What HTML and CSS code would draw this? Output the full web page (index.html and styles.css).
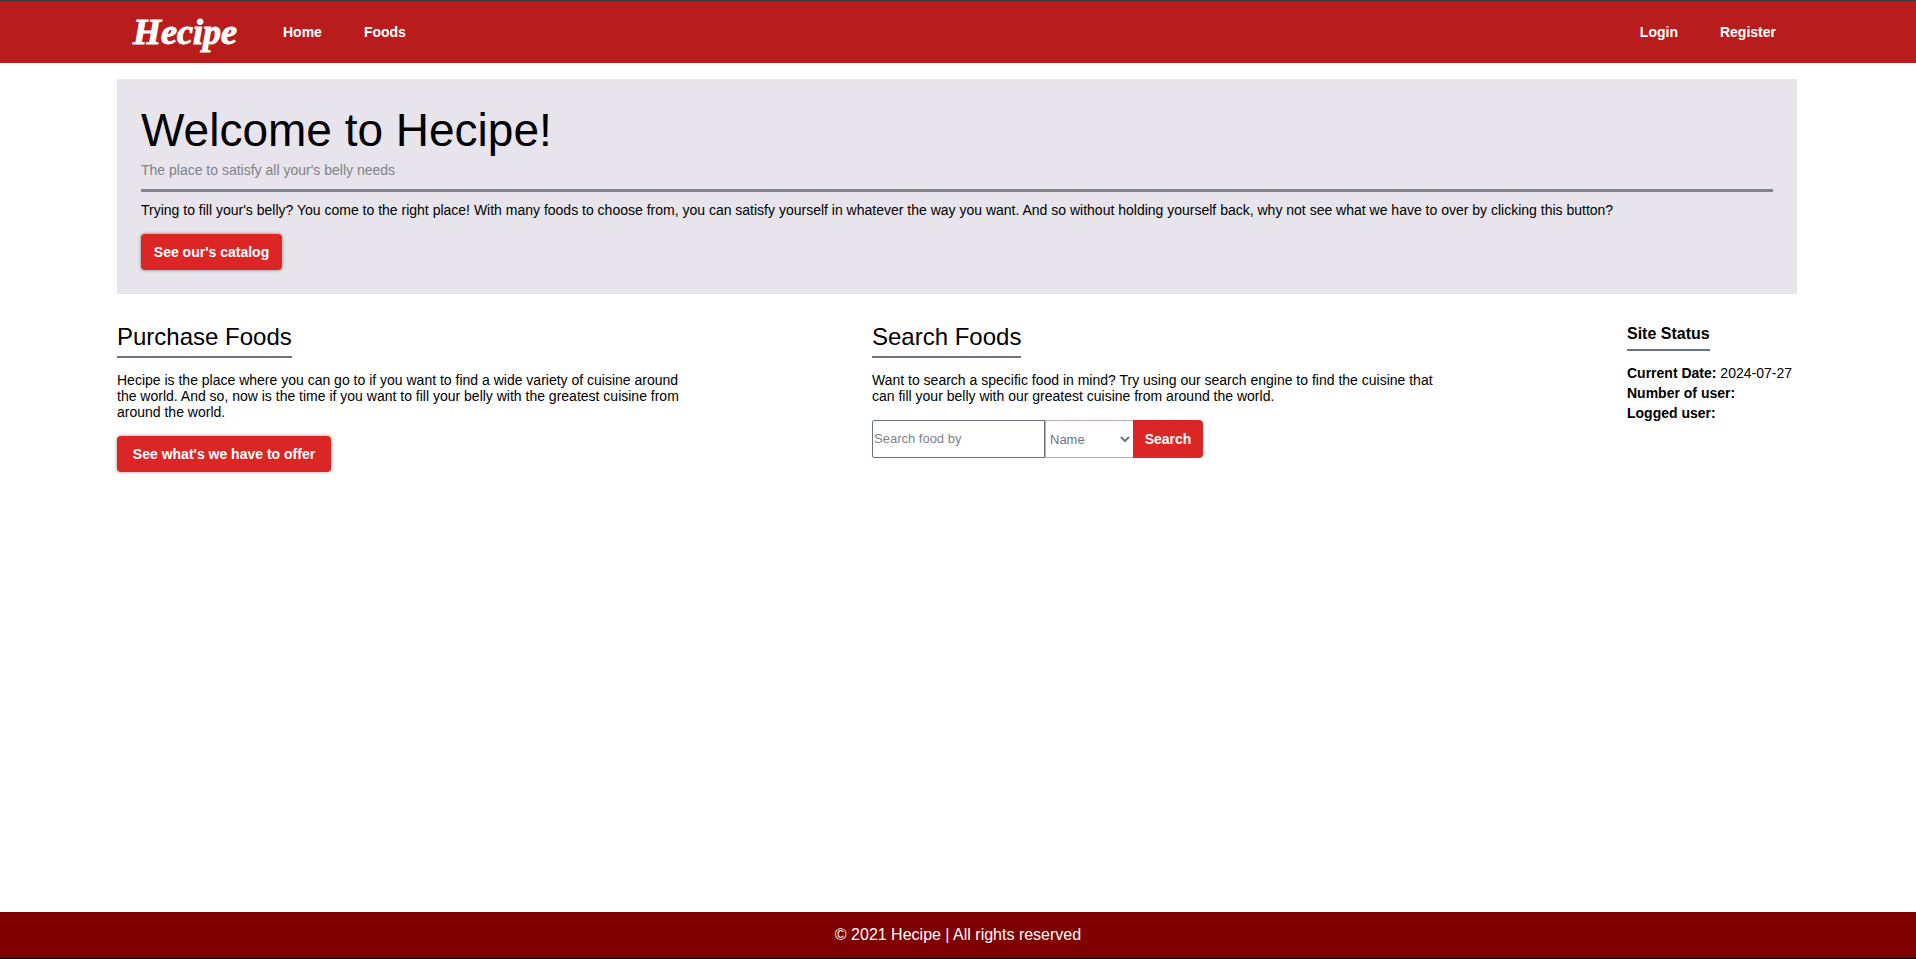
FILE: index.html
```html
<!DOCTYPE html>
<html lang="en">
<head>
<meta charset="utf-8">
<title>Hecipe</title>
<link rel="stylesheet" href="styles.css">
</head>
<body>
<header class="topbar">
  <nav class="nav">
    <a class="logo" href="#">Hecipe</a>
    <a class="nav-link" href="#">Home</a>
    <a class="nav-link" href="#">Foods</a>
    <a class="nav-link push" href="#">Login</a>
    <a class="nav-link" href="#">Register</a>
  </nav>
</header>
<main class="main">
  <section class="hero">
    <h1 class="hero-title">Welcome to Hecipe!</h1>
    <p class="hero-sub">The place to satisfy all your's belly needs</p>
    <p class="hero-text">Trying to fill your's belly? You come to the right place! With many foods to choose from, you can satisfy yourself in whatever the way you want. And so without holding yourself back, why not see what we have to over by clicking this button?</p>
    <button class="btn" type="button">See our's catalog</button>
  </section>
  <div class="columns">
    <section class="column">
      <h2 class="heading">Purchase Foods</h2>
      <p class="text">Hecipe is the place where you can go to if you want to find a wide variety of cuisine around the world. And so, now is the time if you want to fill your belly with the greatest cuisine from around the world.</p>
      <button class="btn btn-wide" type="button">See what's we have to offer</button>
    </section>
    <section class="column">
      <h2 class="heading">Search Foods</h2>
      <p class="text">Want to search a specific food in mind? Try using our search engine to find the cuisine that can fill your belly with our greatest cuisine from around the world.</p>
      <form class="search">
        <input class="search-input" type="text" placeholder="Search food by" aria-label="Search food by">
        <select class="search-select" aria-label="Search field"><option>Name</option></select>
        <button class="search-btn" type="button">Search</button>
      </form>
    </section>
    <aside class="status">
      <h3 class="heading heading-small">Site Status</h3>
      <ul class="status-list">
        <li><b>Current Date:</b> 2024-07-27</li>
        <li><b>Number of user:</b></li>
        <li><b>Logged user:</b></li>
      </ul>
    </aside>
  </div>
</main>
<footer class="footer">© 2021 Hecipe | All rights reserved</footer>
</body>
</html>
```
FILE: styles.css
```css
* { box-sizing: border-box; }
body {
  margin: 0;
  min-height: 100vh;
  display: flex;
  flex-direction: column;
  font: 14px/16px "Liberation Sans", Arial, sans-serif;
  color: #000;
  background: #fff;
}
h1, h2, h3, p, ul { margin: 0; padding: 0; font-weight: normal; }
button, input, select { font: inherit; margin: 0; }
.topbar {
  background: #b91c1c;
  border-top: 1px solid #3a3a3a;
  padding: 0 119px 0 117px;
}
.nav { display: flex; align-items: center; height: 62px; }
.logo {
  width: 145px;
  padding-left: 16px;
  font: italic bold 36px/48px "Liberation Serif", serif;
  color: #fff;
  text-decoration: none;
  -webkit-text-stroke: 1px #fff;
}
.nav-link {
  padding: 8px 21px;
  font-weight: bold;
  color: #fff;
  text-decoration: none;
}
.push { margin-left: auto; }
.main { flex: 1; padding: 16px 119px 16px 117px; }
.hero { background: #e7e4eb; padding: 24px; }
.hero-title { font-size: 46px; line-height: 54px; }
.hero-sub {
  padding: 5px 0 11px;
  color: #808289;
  border-bottom: 3px solid #7f838b;
}
.hero-text { padding: 10px 0 16px; }
.btn {
  display: block;
  width: 141px;
  height: 36px;
  padding: 0;
  border: 0;
  border-radius: 4px;
  background: #dc2626;
  color: #fff;
  font-weight: bold;
  box-shadow: 0 0 3px 1px rgba(0, 0, 0, 0.25);
}
.btn-wide { width: 214px; }
.columns { display: flex; justify-content: space-between; padding-top: 29px; }
.column { width: 576px; }
.heading {
  width: fit-content;
  font-size: 24px;
  line-height: 28px;
  padding-bottom: 5px;
  border-bottom: 2px solid #6b7280;
}
.heading-small { padding-bottom: 4px; font-size: 16px; line-height: 22px; font-weight: bold; }
.text { padding: 14px 0 16px; }
.search { display: flex; height: 38px; }
.search-input {
  width: 173px;
  padding: 0 1px;
  border: 1px solid #6b7280;
  border-radius: 2px 0 0 2px;
  font-size: 13px;
}
.search-input::placeholder { color: #808289; opacity: 1; }
.search-select {
  width: 88px;
  border: 1px solid #c4a5ab;
  border-right: 0;
  border-radius: 0;
  background: #fff;
  color: #6b7280;
  font-size: 13px;
}
.search-btn {
  width: 70px;
  padding: 0;
  border: 0;
  border-radius: 0 4px 4px 0;
  background: #dc2626;
  color: #fff;
  font-weight: bold;
}
.status { width: 170px; }
.status-list { list-style: none; padding-top: 12px; line-height: 20px; }
.footer {
  padding: 12px;
  background: #7f0000;
  border-bottom: 1px solid #000;
  color: #fff;
  font-size: 16px;
  line-height: 22px;
  text-align: center;
}
```
